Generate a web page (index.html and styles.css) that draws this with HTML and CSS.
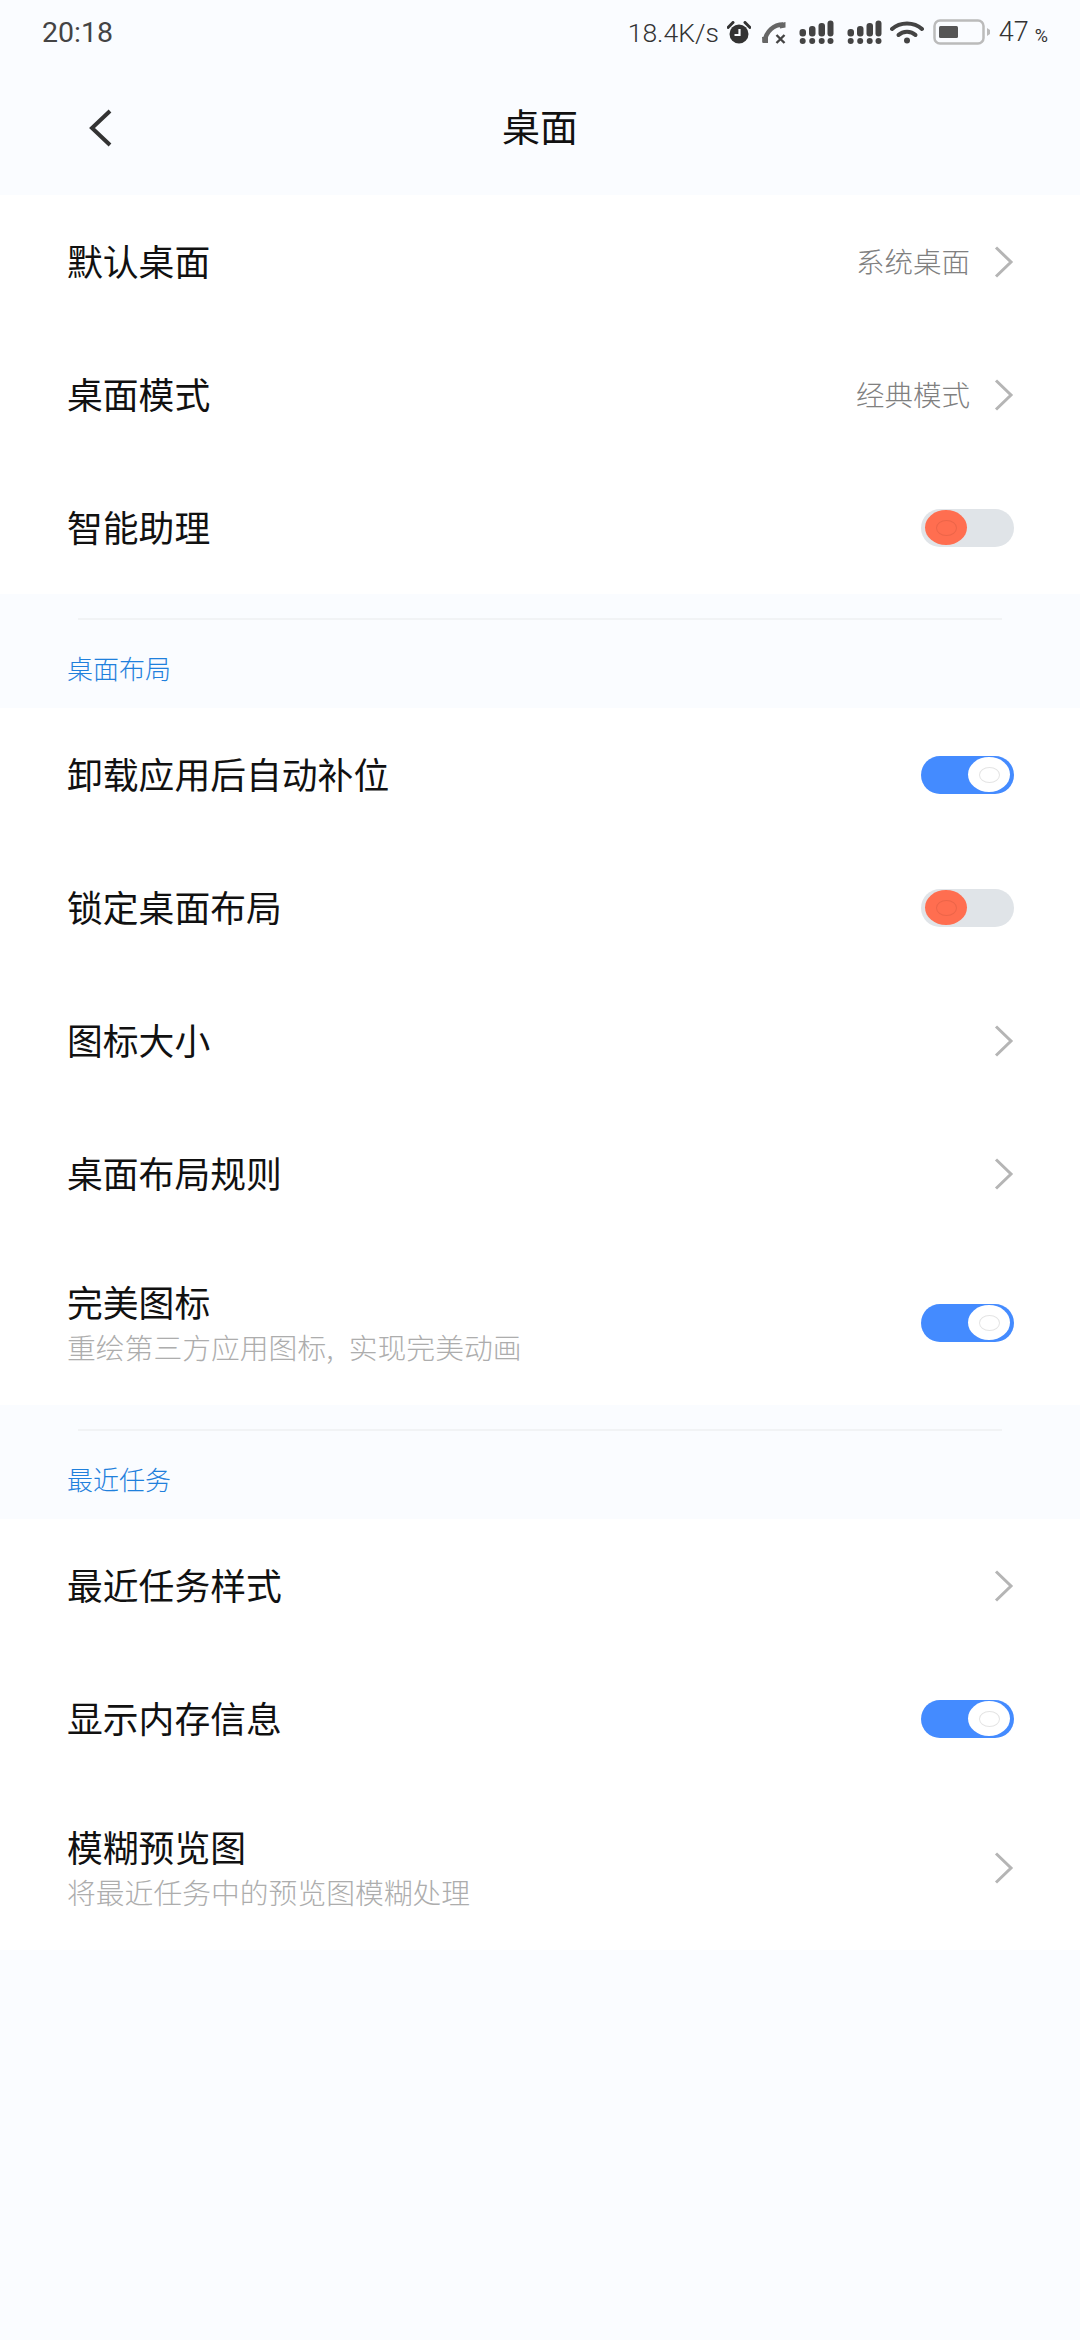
FILE: index.html
```html
<!DOCTYPE html>
<html lang="zh-CN">
<head>
  <meta charset="UTF-8" />
  <meta name="viewport" content="width=device-width, initial-scale=1" />
  <title>桌面</title>
  <link rel="stylesheet" href="styles.css">
</head>
<body>
  <div class="status-bar">
    <span class="time">20:18</span>
    <div class="status-right">
      <span class="speed">18.4K/s</span>
      <svg class="ic-alarm" width="24" height="23" viewBox="0 0 24 23">
        <circle cx="12" cy="13" r="9.5" fill="#333"/>
        <path d="M1 6.5 L6 1.5 M23 6.5 L18 1.5" stroke="#333" stroke-width="3" stroke-linecap="round"/>
        <path d="M12.5 8 V14 H7.5" fill="none" stroke="#fafcff" stroke-width="2.2"/>
      </svg>
      <svg class="ic-call" width="26" height="23" viewBox="0 0 26 23">
        <path d="M22 3.5 C13 3.5 5 10 3.5 21" fill="none" stroke="#666" stroke-width="4.5"/>
        <path d="M18 2.5 L24.5 1 L24.5 6.5 L19 7.5 Z M1 16 L7 15.5 L7 22 L1.5 22 Z" fill="#666"/>
        <path d="M15.5 14 L23.5 22 M23.5 14 L15.5 22" stroke="#444" stroke-width="2.4"/>
      </svg>
      <svg class="ic-signal" width="35" height="24" viewBox="0 0 35 24">
        <g fill="#444">
          <rect x="0.5" y="9" width="6.5" height="7.5" rx="3"/>
          <rect x="10" y="6" width="6.5" height="10.5" rx="3"/>
          <rect x="19.5" y="3" width="6.5" height="13.5" rx="3"/>
          <rect x="28.5" y="0.5" width="6" height="16" rx="3"/>
          <circle cx="3.7" cy="21" r="3"/><circle cx="13.2" cy="21" r="3"/>
          <circle cx="22.7" cy="21" r="3"/><circle cx="31.5" cy="21" r="3"/>
        </g>
      </svg>
      <svg class="ic-signal second" width="35" height="24" viewBox="0 0 35 24">
        <g fill="#444">
          <rect x="0.5" y="9" width="6.5" height="7.5" rx="3"/>
          <rect x="10" y="6" width="6.5" height="10.5" rx="3"/>
          <rect x="19.5" y="3" width="6.5" height="13.5" rx="3"/>
          <rect x="28.5" y="0.5" width="6" height="16" rx="3"/>
          <circle cx="3.7" cy="21" r="3"/><circle cx="13.2" cy="21" r="3"/>
          <circle cx="22.7" cy="21" r="3"/><circle cx="31.5" cy="21" r="3"/>
        </g>
      </svg>
      <svg class="ic-wifi" width="34" height="24" viewBox="0 0 34 24">
        <path d="M2 9 C10 1.5 24 1.5 32 9" fill="none" stroke="#444" stroke-width="4" stroke-linecap="round"/>
        <path d="M8.5 15 C13 10.5 21 10.5 25.5 15" fill="none" stroke="#444" stroke-width="4" stroke-linecap="round"/>
        <circle cx="17" cy="20.5" r="3" fill="#444"/>
      </svg>
      <svg class="ic-battery" width="58" height="26" viewBox="0 0 58 26">
        <rect x="1.5" y="1.5" width="49" height="23" rx="5.5" fill="none" stroke="#bbb" stroke-width="2.5"/>
        <rect x="6" y="7" width="19" height="12" rx="1.5" fill="#555"/>
        <path d="M54 9 L57 11 V15 L54 17 Z" fill="#bbb"/>
      </svg>
      <span class="battery-num">47</span><span class="battery-pct">%</span>
    </div>
  </div>

  <div class="title-bar">
    <svg class="back-icon" width="28" height="42" viewBox="0 0 28 42">
      <path d="M23 4 L5 21 L23 38" fill="none" stroke="#333" stroke-width="4"/>
    </svg>
    <div class="page-title">桌面</div>
  </div>

  <div class="group">
    <div class="row">
      <span class="row-title">默认桌面</span>
      <span class="row-value">系统桌面</span>
      <svg class="chevron" width="20" height="32" viewBox="0 0 20 32"><path d="M2 1.5 L17 16 L2 30.5"/></svg>
    </div>
    <div class="row">
      <span class="row-title">桌面模式</span>
      <span class="row-value">经典模式</span>
      <svg class="chevron" width="20" height="32" viewBox="0 0 20 32"><path d="M2 1.5 L17 16 L2 30.5"/></svg>
    </div>
    <div class="row">
      <span class="row-title">智能助理</span>
      <div class="toggle off"><div class="knob"></div></div>
    </div>
  </div>

  <div class="group-head">
    <div class="divider"></div>
    <div class="group-label">桌面布局</div>
  </div>

  <div class="group">
    <div class="row">
      <span class="row-title">卸载应用后自动补位</span>
      <div class="toggle on"><div class="knob"></div></div>
    </div>
    <div class="row">
      <span class="row-title">锁定桌面布局</span>
      <div class="toggle off"><div class="knob"></div></div>
    </div>
    <div class="row">
      <span class="row-title">图标大小</span>
      <svg class="chevron" width="20" height="32" viewBox="0 0 20 32"><path d="M2 1.5 L17 16 L2 30.5"/></svg>
    </div>
    <div class="row">
      <span class="row-title">桌面布局规则</span>
      <svg class="chevron" width="20" height="32" viewBox="0 0 20 32"><path d="M2 1.5 L17 16 L2 30.5"/></svg>
    </div>
    <div class="row tall">
      <div class="row-text">
        <span class="row-title">完美图标</span>
        <span class="row-sub">重绘第三方应用图标, 实现完美动画</span>
      </div>
      <div class="toggle on"><div class="knob"></div></div>
    </div>
  </div>

  <div class="group-head">
    <div class="divider"></div>
    <div class="group-label">最近任务</div>
  </div>

  <div class="group">
    <div class="row">
      <span class="row-title">最近任务样式</span>
      <svg class="chevron" width="20" height="32" viewBox="0 0 20 32"><path d="M2 1.5 L17 16 L2 30.5"/></svg>
    </div>
    <div class="row">
      <span class="row-title">显示内存信息</span>
      <div class="toggle on"><div class="knob"></div></div>
    </div>
    <div class="row tall">
      <div class="row-text">
        <span class="row-title">模糊预览图</span>
        <span class="row-sub">将最近任务中的预览图模糊处理</span>
      </div>
      <svg class="chevron" width="20" height="32" viewBox="0 0 20 32"><path d="M2 1.5 L17 16 L2 30.5"/></svg>
    </div>
  </div>
</body>
</html>
```

FILE: styles.css
```css
body {
  margin: 0;
  height: 2340px;
  overflow: hidden;
  background-color: #fafcff;
  font-family: "Noto Sans CJK SC", "Noto Sans", sans-serif;
  color: #111;
}

.status-bar {
  height: 64px;
  display: flex;
  justify-content: space-between;
  align-items: center;
  padding: 0 32px 0 42px;
  font-family: Roboto, "Noto Sans", sans-serif;
  font-size: 27px;
  font-weight: 300;
  color: #333;
}

.time {
  font-size: 28.5px;
  font-weight: 400;
  color: #444;
}

.status-right {
  display: flex;
  align-items: center;
}

.speed {
  font-size: 26.5px;
  margin-right: 8px;
}

.ic-call {
  margin-left: 10px;
}

.ic-signal {
  margin-left: 12px;
}

.ic-signal.second {
  margin-left: 13px;
}

.ic-wifi {
  margin-left: 8px;
}

.ic-battery {
  margin-left: 9px;
}

.battery-num {
  margin-left: 8px;
}

.battery-pct {
  font-size: 18px;
  font-weight: 400;
  margin-left: 6px;
  margin-top: 6px;
}

.title-bar {
  height: 131px;
  display: flex;
  align-items: center;
  justify-content: center;
  position: relative;
}

.back-icon {
  position: absolute;
  left: 87px;
  top: 43px;
}

.page-title {
  font-size: 38px;
  margin-top: -10px;
}

.group {
  background-color: #fff;
}

.row {
  height: 133px;
  display: flex;
  align-items: center;
  padding: 0 66px 0 67px;
}

.row.tall {
  height: 165px;
}

.row-title {
  font-size: 35.8px;
  line-height: 46px;
  margin-right: auto;
}

.row > .row-title {
  margin-bottom: 3px;
}

.row-text {
  display: flex;
  flex-direction: column;
  margin-right: auto;
}

.row-sub {
  font-size: 28.8px;
  line-height: 42px;
  margin-top: 2px;
  font-weight: 300;
  color: #adadad;
  word-spacing: 9px;
}

.row-value {
  font-size: 28.5px;
  font-weight: 300;
  color: #808080;
  margin-right: 24px;
  margin-bottom: 2px;
}

.chevron {
  flex: none;
}

.chevron path {
  fill: none;
  stroke: #b5b5b5;
  stroke-width: 3px;
}

.toggle {
  height: 38px;
  border-radius: 19px;
  display: flex;
  align-items: center;
  flex: none;
  width: 89px;
}

.toggle.off {
  background-color: #e0e4e8;
  padding-left: 4px;
}

.toggle.on {
  background-color: #448bff;
  justify-content: flex-end;
  padding-right: 4px;
}

.knob {
  width: 42px;
  height: 35px;
  border-radius: 50%;
  display: flex;
  align-items: center;
  justify-content: center;
}

.knob::after {
  content: "";
  width: 19px;
  height: 14px;
  border-radius: 50%;
  border: 1px solid;
}

.off .knob {
  background-color: #ff6e50;
}

.off .knob::after {
  border-color: #ec6549;
}

.on .knob {
  background-color: #fff;
}

.on .knob::after {
  border-color: #e4e4e4;
}

.group-head {
  height: 114px;
  padding-top: 24px;
  box-sizing: border-box;
}

.divider {
  height: 2px;
  margin: 0 78px;
  background-color: #f1f3f5;
}

.group-label {
  margin-top: 30px;
  margin-left: 67px;
  font-size: 26px;
  line-height: 36px;
  font-weight: 300;
  color: #1f80dc;
}
```
